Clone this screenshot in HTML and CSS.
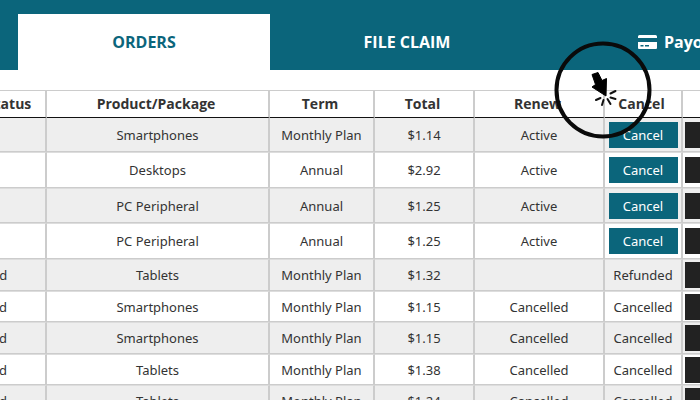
FILE: index.html
```
<!DOCTYPE html>
<html lang="en">
<head>
<meta charset="utf-8">
<title>Orders</title>
<link rel="stylesheet" href="styles.css">
</head>
<body>
<nav class="tabs">
  <a class="tab tab-active" href="#orders">ORDERS</a>
  <a class="tab" href="#claim">FILE CLAIM</a>
  <a class="tab tab-start" href="#payouts">
    <svg class="card-icon" viewBox="0 0 19 15" aria-hidden="true">
      <path fill="#fff" fill-rule="evenodd" d="M1.5 0h16Q19 0 19 1.500V3H0V1.500Q0 0 1.500 0zM0 7h19v6q0 1-1 1H1q-1 0-1-1zM2.500 10v1.500h3V10zM7 10v1.500h4V10z"/>
    </svg>
    Payouts
  </a>
</nav>
<main class="content">
  <table class="orders">
    <colgroup>
      <col class="col-status"><col><col class="col-term"><col class="col-total"><col class="col-renew"><col class="col-cancel"><col class="col-action">
    </colgroup>
    <thead>
      <tr><th>Payment Status</th><th>Product/Package</th><th>Term</th><th>Total</th><th>Renew</th><th>Cancel</th><th></th></tr>
    </thead>
    <tbody>
      <tr class="live"><td>Active</td><td>Smartphones</td><td>Monthly Plan</td><td>$1.14</td><td>Active</td><td><button class="btn">Cancel</button></td><td><button class="btn btn-dark" aria-label="Details"></button></td></tr>
      <tr class="live"><td>Active</td><td>Desktops</td><td>Annual</td><td>$2.92</td><td>Active</td><td><button class="btn">Cancel</button></td><td><button class="btn btn-dark" aria-label="Details"></button></td></tr>
      <tr class="live"><td>Active</td><td>PC Peripheral</td><td>Annual</td><td>$1.25</td><td>Active</td><td><button class="btn">Cancel</button></td><td><button class="btn btn-dark" aria-label="Details"></button></td></tr>
      <tr class="live"><td>Active</td><td>PC Peripheral</td><td>Annual</td><td>$1.25</td><td>Active</td><td><button class="btn">Cancel</button></td><td><button class="btn btn-dark" aria-label="Details"></button></td></tr>
      <tr><td>Refunded</td><td>Tablets</td><td>Monthly Plan</td><td>$1.32</td><td></td><td>Refunded</td><td><button class="btn btn-dark" aria-label="Details"></button></td></tr>
      <tr><td>Cancelled</td><td>Smartphones</td><td>Monthly Plan</td><td>$1.15</td><td>Cancelled</td><td>Cancelled</td><td><button class="btn btn-dark" aria-label="Details"></button></td></tr>
      <tr><td>Cancelled</td><td>Smartphones</td><td>Monthly Plan</td><td>$1.15</td><td>Cancelled</td><td>Cancelled</td><td><button class="btn btn-dark" aria-label="Details"></button></td></tr>
      <tr><td>Cancelled</td><td>Tablets</td><td>Monthly Plan</td><td>$1.38</td><td>Cancelled</td><td>Cancelled</td><td><button class="btn btn-dark" aria-label="Details"></button></td></tr>
      <tr><td>Cancelled</td><td>Tablets</td><td>Monthly Plan</td><td>$1.24</td><td>Cancelled</td><td>Cancelled</td><td><button class="btn btn-dark" aria-label="Details"></button></td></tr>
    </tbody>
  </table>
</main>
<svg class="pointer" viewBox="0 0 100 100" aria-hidden="true">
  <circle cx="50" cy="50" r="46.500" fill="none" stroke="#0a0a0a" stroke-width="4"/>
  <path fill="#000" stroke="#000" stroke-linejoin="round" d="M39 34.500l6-2 4 8 4.500-2-.5 17.500-14-9 3.500-2.500z"/>
  <path fill="none" stroke="#111" stroke-width="2" stroke-linecap="round" d="M57.500 53.500l5-2.500M57.500 57.500l5 1.500M54.500 59l3 5M50.500 60l-1.500 5M47.500 58l-4.500 2"/>
</svg>
</body>
</html>
```
FILE: styles.css
```
* {
  box-sizing: border-box;
}

body {
  margin: 0;
  height: 100vh;
  position: relative;
  overflow: hidden;
  background: #fff;
  color: #333;
  font: 13px/18px "Noto Sans", "Open Sans", sans-serif;
}

.tabs {
  display: flex;
  gap: 11px;
  padding: 14px 0 0 18px;
  overflow: hidden;
  background: #0b657b;
}

.tab {
  flex: 0 0 36vw;
  display: flex;
  align-items: center;
  justify-content: center;
  height: 56px;
  color: #fff;
  font-family: "Open Sans", "Noto Sans", sans-serif;
  font-size: 16px;
  font-weight: 700;
  text-decoration: none;
}

.tab-active {
  background: #fff;
  color: #0b657b;
}

.tab-start {
  justify-content: flex-start;
  gap: 7px;
  padding-left: 94px;
}

.card-icon {
  width: 19px;
  height: 15px;
}

.content {
  padding-top: 20px;
  overflow: hidden;
}

.orders {
  width: calc(100% + 180px);
  margin-left: -90px;
  table-layout: fixed;
  border-collapse: separate;
  border-spacing: 0;
  text-align: center;
}

.col-status { width: 137px; }
.col-term { width: 105px; }
.col-total { width: 100px; }
.col-renew { width: 130px; }
.col-cancel { width: 78px; }
.col-action { width: 107px; }

th,
td {
  padding: 0;
  border-right: 2px solid #ccc;
  white-space: nowrap;
}

th {
  height: 27px;
  padding-right: 3px;
  border-top: 1px solid #ccc;
  font-family: "Open Sans", "Noto Sans", sans-serif;
  font-size: 14px;
}

td {
  height: 32px;
  border-top: 1px solid #ddd;
  border-bottom: 1px solid #ccc;
}

tbody tr:nth-child(even) td { height: 31px; }
tbody tr.live td { height: 35px; }
tbody tr.live:nth-child(even) td { height: 36px; }
tbody tr:nth-child(odd) { background: #eee; }
tbody tr:first-child td { border-top-color: #111; }

.btn {
  display: block;
  width: calc(100% - 7px);
  height: 26px;
  margin: 0 auto;
  padding: 0;
  border: 0;
  background: #0b657b;
  color: #fff;
  font: inherit;
}

.btn-dark {
  width: calc(100% - 4px);
  background: #222;
}

.pointer {
  position: absolute;
  left: 553px;
  top: 40px;
  width: 100px;
  height: 100px;
}
```
